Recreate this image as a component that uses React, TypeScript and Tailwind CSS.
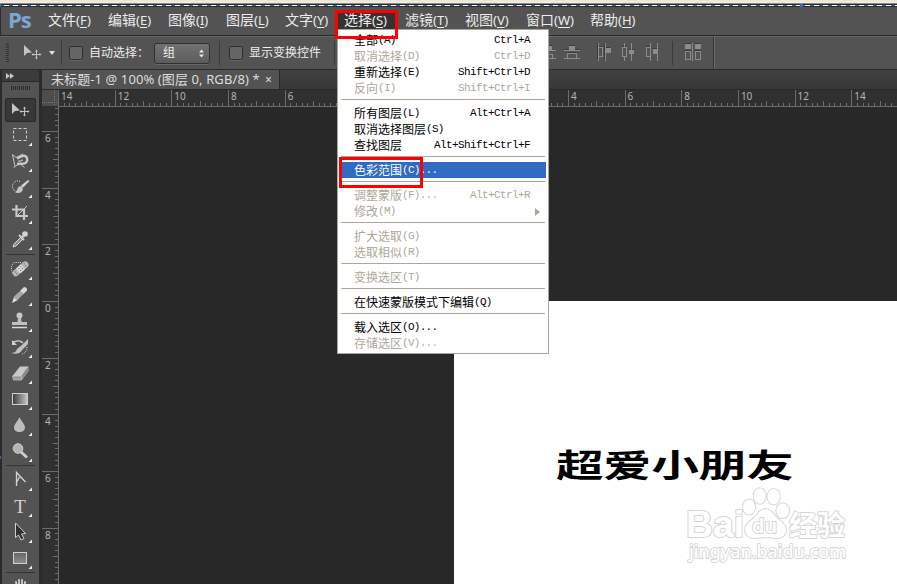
import { ReactNode } from "react";
import clsx from "clsx";

const menus = [
    { label: "文件", hotkey: "F", width: "w-[60px]" },
    { label: "编辑", hotkey: "E", width: "w-[60px]" },
    { label: "图像", hotkey: "I", width: "w-[58px]" },
    { label: "图层", hotkey: "L", width: "w-[59px]" },
    { label: "文字", hotkey: "Y", width: "w-[59px]" },
    { label: "选择", hotkey: "S", width: "w-[61px]", open: true },
    { label: "滤镜", hotkey: "T", width: "w-[60px]" },
    { label: "视图", hotkey: "V", width: "w-[61px]" },
    { label: "窗口", hotkey: "W", width: "w-[64px]" },
    { label: "帮助", hotkey: "H", width: "w-[60px]" },
];

interface SelectItem {
    label: string;
    suffix?: string;
    shortcut?: string;
    disabled?: boolean;
    active?: boolean;
    submenu?: boolean;
}

const selectMenu: SelectItem[][] = [
    [
        { label: "全部", suffix: "(A)", shortcut: "Ctrl+A" },
        { label: "取消选择", suffix: "(D)", shortcut: "Ctrl+D", disabled: true },
        { label: "重新选择", suffix: "(E)", shortcut: "Shift+Ctrl+D" },
        { label: "反向", suffix: "(I)", shortcut: "Shift+Ctrl+I", disabled: true },
    ],
    [
        { label: "所有图层", suffix: "(L)", shortcut: "Alt+Ctrl+A" },
        { label: "取消选择图层", suffix: "(S)" },
        { label: "查找图层", shortcut: "Alt+Shift+Ctrl+F" },
    ],
    [{ label: "色彩范围", suffix: "(C)...", active: true }],
    [
        { label: "调整蒙版", suffix: "(F)...", shortcut: "Alt+Ctrl+R", disabled: true },
        { label: "修改", suffix: "(M)", disabled: true, submenu: true },
    ],
    [
        { label: "扩大选取", suffix: "(G)", disabled: true },
        { label: "选取相似", suffix: "(R)", disabled: true },
    ],
    [{ label: "变换选区", suffix: "(T)", disabled: true }],
    [{ label: "在快速蒙版模式下编辑", suffix: "(Q)" }],
    [
        { label: "载入选区", suffix: "(O)..." },
        { label: "存储选区", suffix: "(V)...", disabled: true },
    ],
];

const MAJOR = 56.67;
// labels under the open menu are left out
const rulerX = [14, 12, 10, 8, 6, null, null, null, null, 4, 6, 8, 10, 12, 14];
const rulerY = [6, 4, 2, 0, 2, 4, 6, 8];

export default function App() {
    return (
        <div className="relative flex h-[584px] w-[897px] flex-col overflow-hidden bg-[#282828] font-['Noto_Sans','Noto_Sans_CJK_SC',sans-serif]">
            <TopEdge></TopEdge>
            <MenuBar></MenuBar>
            <OptionsBar></OptionsBar>

            <div className="flex min-h-0 flex-1">
                <Toolbar></Toolbar>
                <div className="flex min-w-0 flex-1 flex-col">
                    <TabBar></TabBar>
                    <HorizontalRuler></HorizontalRuler>
                    <div className="flex min-h-0 flex-1">
                        <VerticalRuler></VerticalRuler>
                        <Canvas></Canvas>
                    </div>
                </div>
            </div>

            <SelectDropdown></SelectDropdown>
            <div className="absolute top-[10px] left-[335px] h-[29px] w-[63px] border-3 border-[#ff0000]"></div>
            <div className="absolute top-[157px] left-[339px] h-[31px] w-[84px] border-3 border-[#ff0000]"></div>
            <div className="absolute top-[456px] left-0 h-[3px] w-px bg-[#316ac5]"></div>
        </div>
    );
}

const TopEdge = () => {
    return (
        <div className="relative flex h-[7px] shrink-0 flex-col">
            <div className="h-[2px] bg-[#ece9d8]"></div>
            <div className="h-px bg-[#f4f2e8]"></div>
            <div className="h-px bg-[#8a877b]"></div>
            <div className="h-px bg-[#2b2b2b]"></div>
            <div className="h-px bg-[repeating-linear-gradient(90deg,#316ac5_0_4px,#ffffff_4px_9px)]"></div>
            <div className="h-px bg-[#2b2b2b]"></div>
            <div className="absolute top-1 left-[800px] size-[3px] bg-[#316ac5]"></div>
            <div className="absolute top-1 left-0 h-[3px] w-px bg-[#316ac5]"></div>
        </div>
    );
};

const MenuBar = () => {
    return (
        <div className="flex h-[29px] shrink-0 border-b border-l border-[#2b2b2b] bg-[#535353] pl-[7px]">
            <div className="w-[40px] font-['Open_Sans'] text-[22px] leading-[25px] font-bold tracking-[-1px] text-[#7ba7d4]">
                Ps
            </div>
            {menus.map((menu) => (
                <div
                    key={menu.label}
                    className={clsx("flex h-[26px] text-[14px] leading-[26px] whitespace-nowrap text-[#ececec]", menu.width)}
                >
                    <span className={clsx("flex", menu.open && "-ml-[6px] mt-1 h-[20px] bg-[#333333] pr-2 pl-[6px] leading-[18px]")}>
                        <span>{menu.label}</span>
                        <span className="text-[13px]">
                            (<span className="underline underline-offset-2">{menu.hotkey}</span>)
                        </span>
                    </span>
                </div>
            ))}
        </div>
    );
};

const Divider = () => {
    return <div className="h-6 w-px bg-[#3a3a3a]"></div>;
};

const Checkbox = () => {
    return <div className="size-[14px] rounded-[2px] border border-[#2f2f2f] bg-[#656565] shadow-[0_1px_0_#666]"></div>;
};

const OptionsBar = () => {
    return (
        <div className="flex h-[34px] shrink-0 items-center border-t border-b border-t-[#666666] border-b-[#2b2b2b] bg-[#535353] text-[12px] whitespace-nowrap text-[#ededed]">
            <div className="ml-[6px] h-5 w-[3px] bg-[repeating-linear-gradient(180deg,#343434_0_1px,#535353_1px_2px)]"></div>
            <svg className="ml-[13px]" width="20" height="18" viewBox="0 0 20 18">
                <path d="M2 1v11l3-3 5-.5z" fill="#c4c4c4"></path>
                <MoveCross x={14.5} y={10.5}></MoveCross>
            </svg>
            <svg className="ml-[7px]" width="6" height="4" viewBox="0 0 6 4">
                <path d="M0 0h6L3 4z" fill="#e0e0e0"></path>
            </svg>
            <div className="ml-[6px]"><Divider></Divider></div>
            <div className="ml-[7px]"><Checkbox></Checkbox></div>
            <span className="ml-[6px] w-[65px]">自动选择：</span>
            <div className="flex h-[21px] w-[56px] items-center justify-between rounded-[3px] border border-[#303030] bg-linear-to-b from-[#727272] to-[#5c5c5c] pr-1 pl-2 shadow-[0_1px_0_#666]">
                <span>组</span>
                <svg width="7" height="9" viewBox="0 0 7 9">
                    <path d="M1 3.5L3.5 0.5L6 3.5zM1 5.5L3.5 8.5L6 5.5z" fill="#e8e8e8"></path>
                </svg>
            </div>
            <div className="ml-[9px]"><Divider></Divider></div>
            <div className="ml-[9px]"><Checkbox></Checkbox></div>
            <span className="ml-[6px] w-[85px]">显示变换控件</span>
            <Divider></Divider>
            <AlignIcons></AlignIcons>
            <div className="h-full w-px bg-[#353535]"></div>
            <div className="h-full w-px bg-[#6a6a6a]"></div>
        </div>
    );
};

const AlignIcons = () => {
    return (
        <svg className="ml-[205px]" width="173" height="32" viewBox="540 37 173 32" fill="none" shapeRendering="crispEdges">
            <g fill="#3a3a3a">
                <path d="M547 45h5v1h-5zM569 45h6v1h-6zM606 47h4v1h-4zM629 49h5v1h-5zM653 48h4v1h-4zM685 43h6v1h-6zM695 43h6v1h-6z"></path>
                <path d="M564 49h16v1h-16zM567 52h10v1h-10zM599 46h4v1h-4zM622 46h5v1h-5zM646 46h4v1h-4zM685 50h6v1h-6zM695 50h6v1h-6z"></path>
                <path d="M597 43h1v17h-1zM604 43h1v17h-1zM672 41h1v24h-1z"></path>
            </g>
            <g fill="#8c8c8c">
                <path d="M545 46h7v4h-7zM569 46h6v4h-6zM606 48h5v5h-5zM629 50h5v4h-5zM653 49h4v5h-4zM685 44h6v5h-6zM695 44h6v5h-6z"></path>
                <path d="M545 50h11v1h-11zM545 58h11v1h-11zM564 50h16v1h-16zM564 58h16v1h-16z"></path>
                <path d="M598 43h1v18h-1zM605 43h1v18h-1zM631 43h1v18h-1zM650 43h1v18h-1zM657 43h1v18h-1zM692 43h1v18h-1zM624 43h1v4h-1zM624 57h1v4h-1z"></path>
            </g>
            <path
                d="M545 54.5h7.5v4M567.5 58v-4.5h9v4.5M599 47.5h3.5v9h-3.500M622.5 47.5h4v9h-4zM650 47.5h-3.5v9h3.5M685.5 51.5h5v8h-5zM695.5 51.5h5v8h-5z"
                stroke="#8c8c8c"
            ></path>
        </svg>
    );
};

const MoveCross = ({ x, y }: { x: number; y: number }) => {
    return (
        <g transform={`translate(${x} ${y})`} stroke="#c4c4c4" fill="#c4c4c4">
            <path d="M-3.5 0h7M0 -3.5v7" strokeWidth="1"></path>
            <path d="M0 -5l1.5 2h-3zM0 5l1.5 -2h-3zM-5 0l2 -1.5v3zM5 0l-2 -1.5v3z" stroke="none"></path>
        </g>
    );
};

const TabBar = () => {
    return (
        <div className="flex h-5 shrink-0 border-b border-[#282828] bg-linear-to-b from-[#404040] to-[#383838]">
            <div className="flex h-[19px] w-[238px] items-center border-r border-[#282828] bg-[#535353] pl-[9px] text-[13px] whitespace-nowrap text-[#dddddd]">
                <span className="w-[214px] tracking-[0.1px]">未标题-1 @ 100% (图层 0, RGB/8) *</span>
                <span className="text-[12px]">×</span>
            </div>
        </div>
    );
};

const HorizontalRuler = () => {
    return (
        <div className="relative flex h-[17px] shrink-0 overflow-hidden bg-[#303030]">
            <div className="h-[16px] w-[16px] shrink-0 bg-[#4d4d4d]">
                <svg width="16" height="16">
                    <path d="M0 12.5h16M12.5 0v16" stroke="#777777" strokeDasharray="1 1"></path>
                </svg>
            </div>
            {rulerX.map((value, i) => (
                <div key={i} className="w-[56.67px] shrink-0 pl-[3px] text-[10px] leading-[13px] text-[#b4b4b4]">
                    {value}
                </div>
            ))}
            <svg className="absolute top-0 left-0" width="855" height="17" shapeRendering="crispEdges">
                {Array.from({ length: 150 }, (_, i) => (
                    <rect
                        key={i}
                        x={Math.round(16 + (i * MAJOR) / 10)}
                        y={i % 10 === 0 ? 0 : i % 5 === 0 ? 11 : 13}
                        width="1"
                        height="17"
                        fill="#6c6c6c"
                    ></rect>
                ))}
                <rect x="16" y="16" width="840" height="1" fill="#6c6c6c"></rect>
            </svg>
        </div>
    );
};

const VerticalRuler = () => {
    return (
        <div className="relative flex w-[17px] shrink-0 flex-col overflow-hidden bg-[#303030] pt-[25px]">
            {rulerY.map((value, i) => (
                <div key={i} className="h-[56.67px] shrink-0 pl-[3px] text-[10px] leading-[13px] text-[#b4b4b4]">
                    {value}
                </div>
            ))}
            <svg className="absolute top-0 left-0" width="17" height="478" shapeRendering="crispEdges">
                {Array.from({ length: 90 }, (_, i) => i - 4).map((i) => (
                    <rect
                        key={i}
                        x={i % 10 === 0 ? 0 : i % 5 === 0 ? 11 : 13}
                        y={Math.round(24 + (i * MAJOR) / 10)}
                        width="17"
                        height="1"
                        fill="#6c6c6c"
                    ></rect>
                ))}
                <rect x="16" y="0" width="1" height="480" fill="#6c6c6c"></rect>
            </svg>
        </div>
    );
};

// icons are drawn around the centre of the button
const Tool = ({ children, plain, selected }: { children: ReactNode; plain?: boolean; selected?: boolean }) => {
    return (
        <div
            className={clsx(
                "flex shrink-0 items-center justify-center",
                selected ? "mx-[3px] h-[24px] rounded-[2px] border border-[#292929] bg-[#383838]" : "h-[26px]",
            )}
        >
            <svg width="27" height="24" viewBox="-13 -12 27 24" fill="none" className="shrink-0">
                {children}
                {!plain && <path d="M12 7.5v3.5h-3.5z" fill="#f0f0f0"></path>}
            </svg>
        </div>
    );
};

const ToolRule = () => {
    return <div className="mx-1 my-px h-px shrink-0 bg-[#343434]"></div>;
};

const Toolbar = () => {
    return (
        <div className="flex w-[42px] shrink-0 border-l-2 border-[#2b2b2b] bg-[#2b2b2b]">
            <svg width="0" height="0" className="absolute">
                <defs>
                    <linearGradient id="ramp" x1="0" x2="1" y1="0" y2="0">
                        <stop offset="0" stopColor="#3a3a3a"></stop>
                        <stop offset="1" stopColor="#c8c8c8"></stop>
                    </linearGradient>
                    <linearGradient id="shade" x1="0" x2="0" y1="0" y2="1">
                        <stop offset="0" stopColor="#666666"></stop>
                        <stop offset="1" stopColor="#8e8e8e"></stop>
                    </linearGradient>
                </defs>
            </svg>
            <div className="flex w-[37px] flex-col overflow-hidden bg-[#535353]">
                <div className="flex h-[12px] shrink-0 items-center border-b border-[#282828] bg-[#3b3b3b] pl-1">
                    <svg width="8" height="6" viewBox="0 0 8 6">
                        <path d="M0 0l4 3-4 3zM4 0l4 3-4 3z" fill="#c8c8c8"></path>
                    </svg>
                </div>
                <div className="mt-1 mb-2 ml-[9px] h-[4px] w-5 shrink-0 bg-[repeating-linear-gradient(90deg,#2d2d2d_0_1px,#535353_1px_2px)]"></div>
                <Tool plain selected>
                    <path d="M-8 -7v11l3 -3 5 -.5z" fill="#c4c4c4"></path>
                    <MoveCross x={4.5} y={1.5}></MoveCross>
                </Tool>
                <Tool>
                    <rect x="-6.5" y="-6.5" width="13" height="12" stroke="#d0d0d0" strokeDasharray="3 2"></rect>
                </Tool>
                <Tool>
                    <path d="M-7.5 -6.5L-4 -3.5L3 -7M-7.5 -6.5l2.5 12M-6.5 6.5l6 -4l5 4" stroke="#c4c4c4"></path>
                    <path d="M-3 -2.5L2.5 -5C8.5 -6.5 8.5 2 4 2.5L-3 3" stroke="#c8c8c8" strokeWidth="2.4"></path>
                    <path d="M-2 .5l5 -1.5" stroke="#a8a8a8" strokeWidth="1.5"></path>
                </Tool>
                <Tool>
                    <path d="M0 -5.5C-3 -7.5 -7.5 -5 -7.5 -.5C-7.5 3 -5 4.5 -3 4.5" stroke="#e0e0e0" strokeDasharray="1 1.2"></path>
                    <path d="M9.5 -6L8 -7L1 -1.500L3 .8z" fill="#d0d0d0"></path>
                    <path d="M2.500 .5C4 5 -1 7 -5 5.500C-3 4.500 -3 2 -1.500 0C-.5 -1 1.500 -1 2.500 .5z" fill="#c4c4c4"></path>
                </Tool>
                <Tool>
                    <path d="M-8 -3.5H4V7M-3.5 -8V3H8" stroke="#c8c8c8" strokeWidth="2.2"></path>
                    <path d="M-2 2L7 -7" stroke="#c8c8c8"></path>
                </Tool>
                <Tool>
                    <path d="M1 -2L-6 5l-1 3l3 -1L3 0z" fill="#8e8e8e" stroke="#d4d4d4"></path>
                    <path d="M-1 -4l5 5M2 -1.5L6 -5.5" stroke="#d0d0d0" strokeWidth="2"></path>
                    <circle cx="5" cy="-5" r="2.8" fill="#d4d4d4"></circle>
                </Tool>
                <div className="h-px shrink-0"></div>
                <ToolRule></ToolRule>
                <Tool>
                    <path d="M1 -6.5H-6C-10 -3 -9 3 -6 5" stroke="#e0e0e0" strokeDasharray="1 1.2"></path>
                    <g transform="rotate(-42)">
                        <rect x="-9" y="-3" width="19" height="6.5" rx="3" fill="#b8b8b8"></rect>
                        <rect x="-2.5" y="-3" width="6" height="6.5" fill="#dddddd"></rect>
                        <path d="M-6 -1h1M-6 1.5h1M-1 -1h1M1.5 -1h1M-1 1.5h1M1.5 1.5h1M6 -1h1M6 1.5h1" stroke="#555555"></path>
                    </g>
                </Tool>
                <Tool>
                    <path d="M-8 8l2 -6L-2 5z" fill="#e0e0e0"></path>
                    <path d="M-6.5 2L0 -4L3.5 -1L-3 5.5z" fill="#a8a8a8"></path>
                    <path d="M0 -4L4 -8C6 -8 7.5 -6.5 7 -4.5L3.5 -1z" fill="#d8d8d8"></path>
                </Tool>
                <Tool>
                    <circle cx="-.5" cy="-5.5" r="3" fill="#c8c8c8"></circle>
                    <path d="M-2 -3H1L1.5 1H7V4H-8V1H-2.5z" fill="#c0c0c0"></path>
                    <path d="M-8 6.5H7" stroke="#d8d8d8" strokeWidth="1.5"></path>
                </Tool>
                <Tool>
                    <path d="M8 -8L2 -2L-3 2C-4 5 -6 6 -9 6C-4 8 1 6 2 3L8 -3z" fill="#c0c0c0"></path>
                    <path d="M-7 -4.5C-3 -7 1 -6 3 -4" stroke="#d0d0d0" strokeWidth="1.5"></path>
                    <path d="M-8 -7v5h5z" fill="#d0d0d0"></path>
                    <path d="M7 0C7 4 5 6 2 7" stroke="#d0d0d0" strokeDasharray="1 1"></path>
                </Tool>
                <Tool>
                    <path d="M-7.5 3L0 -6.5H8L1.5 3z" fill="#c8c8c8"></path>
                    <path d="M-7.5 3H1.5V7H-6.5z" fill="#9a9a9a" stroke="#cccccc" strokeWidth=".7"></path>
                    <path d="M1.5 3L8 -6.5V-2L1.5 7z" fill="#808080" stroke="#c4c4c4" strokeWidth=".7"></path>
                </Tool>
                <Tool>
                    <rect x="-7.5" y="-5.5" width="15" height="11" fill="url(#ramp)" stroke="#d0d0d0"></rect>
                </Tool>
                <Tool>
                    <path d="M-.5 -8C1 -4 5 -1 5 2.5C5 5.5 2.5 7 -.5 7S-6 5.5 -6 2.5C-6 -1 -2 -4 -.5 -8z" fill="#bdbdbd"></path>
                </Tool>
                <Tool>
                    <path d="M0 0L7 6.5" stroke="#cccccc" strokeWidth="3"></path>
                    <circle cx="-2" cy="-2.5" r="4.8" fill="#b4b4b4" stroke="#d0d0d0"></circle>
                </Tool>
                <ToolRule></ToolRule>
                <Tool>
                    <path d="M-3.5 6V-7.5L5.5 2M-3.5 2.500L-.5 -3" stroke="#d4d4d4" strokeWidth="1.3"></path>
                </Tool>
                <Tool>
                    <text x="0" y="6.5" textAnchor="middle" fontSize="19" fill="#d4d4d4" fontFamily="Liberation Serif, serif">T</text>
                </Tool>
                <Tool>
                    <path d="M-4.5 -9V5.5L-1.5 3L1 8L4 6.5L1.5 2L5.5 1.5z" fill="#303030" stroke="#d0d0d0"></path>
                </Tool>
                <Tool>
                    <rect x="-6.5" y="-5.5" width="13" height="11" fill="url(#shade)" stroke="#d0d0d0"></rect>
                </Tool>
                <ToolRule></ToolRule>
                <Tool plain>
                    <path d="M-4 -5l1.5 8M-1 -7v8M2 -7v8M5 -5l-1 8M-7 -2l4 7" stroke="#d0d0d0" strokeWidth="1.8" strokeLinecap="round"></path>
                </Tool>
            </div>
            <div className="ml-px w-[2px] bg-[#2b2b2b]"></div>
        </div>
    );
};

const Canvas = () => {
    return (
        <div className="flex min-w-0 flex-1 items-end justify-end bg-[#282828]">
            <div className="flex h-[283px] w-[443px] flex-col bg-white">
                <div className="mt-[140px] ml-[102px] h-12 w-[160px] origin-left scale-x-[1.487] text-[32px] leading-[48px] font-bold whitespace-nowrap text-black">
                    超爱小朋友
                </div>
                <Watermark></Watermark>
            </div>
        </div>
    );
};

const Watermark = () => {
    return (
        <svg
            className="-mt-[3px] ml-[226px]"
            width="180"
            height="80"
            viewBox="680 486 180 80"
            fill="#ffffff"
            stroke="#d6d6d6"
            strokeWidth="2"
            strokeLinejoin="round"
            paintOrder="stroke"
            fontFamily="Noto Sans, Noto Sans CJK SC, sans-serif"
        >
            <text x="686" y="537" fontSize="36" fontWeight="700" textLength="58" lengthAdjust="spacingAndGlyphs" fontFamily="Liberation Sans, sans-serif">Bai</text>
            <ellipse cx="749" cy="507" rx="6" ry="7.5"></ellipse>
            <ellipse cx="759.7" cy="496" rx="6" ry="7.8"></ellipse>
            <ellipse cx="773.7" cy="496.7" rx="6.2" ry="7.8"></ellipse>
            <ellipse cx="782.7" cy="510.7" rx="6.3" ry="7.5"></ellipse>
            <path d="M765.5 509C770 509 773 513 776 517C780 521 786 524 786 530C786 536 781 538.5 776 538C770 537 762 537 756 538C750 538.5 745 535 745 530C745 524 751 521 755 517C758 513 761 509 765.5 509z"></path>
            <text x="752" y="533" fontSize="20" textLength="25" lengthAdjust="spacingAndGlyphs" fontWeight="600">du</text>
            <text x="789" y="536" fontSize="28" fontWeight="700" textLength="56">经验</text>
            <text x="689" y="558" fontSize="17.5" fontWeight="500" textLength="157" lengthAdjust="spacingAndGlyphs" strokeWidth="1.8">jingyan.baidu.com</text>
        </svg>
    );
};

const SelectDropdown = () => {
    return (
        <div className="absolute top-[29px] left-[337px] flex w-[212px] flex-col border border-[#aca899] bg-white px-[4px] pt-[2px] pb-[2px] text-[12px] text-black">
            {selectMenu.map((group, i) => (
                <div key={i}>
                    {i > 0 && <div className="-mx-px mt-[3px] mb-[5px] h-px bg-[#aca899]"></div>}
                    {group.map((item) => (
                        <div
                            key={item.label}
                            className={clsx(
                                "-mr-[2px] flex h-4 items-center pt-px pr-[16px] pl-[12px] leading-[15px] whitespace-nowrap",
                                item.disabled && "text-[#aca899]",
                                item.active && "bg-[#316ac5] text-white",
                            )}
                        >
                            <span>{item.label}</span>
                            <span className="font-['Liberation_Mono',monospace] text-[11px] tracking-[-0.7px]">{item.suffix}</span>
                            <span className="ml-auto font-['Liberation_Mono',monospace] text-[11px] tracking-[-0.6px]">{item.shortcut}</span>
                            {item.submenu && (
                                <svg width="5" height="8" viewBox="0 0 5 8" className="-mr-[10px]">
                                    <path d="M0 0v8l5-4z" fill="#aca899"></path>
                                </svg>
                            )}
                        </div>
                    ))}
                </div>
            ))}
        </div>
    );
};
